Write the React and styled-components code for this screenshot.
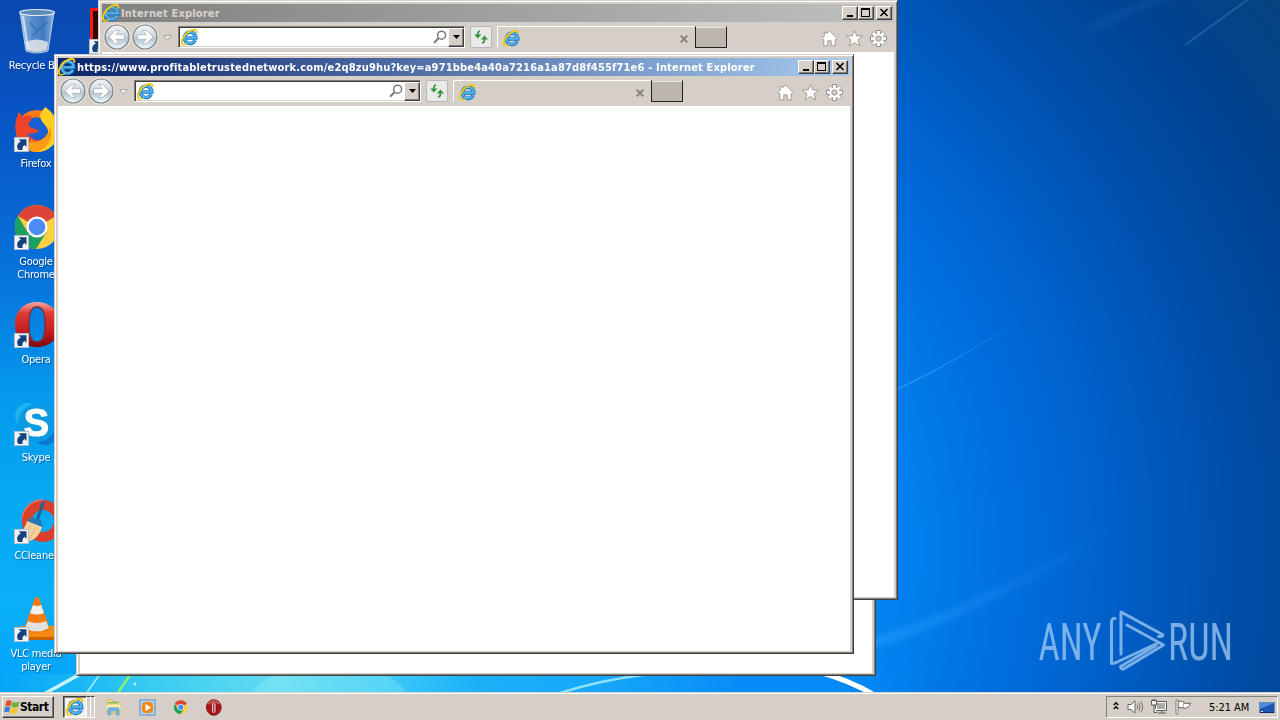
import React from 'react';
import styled, { createGlobalStyle } from 'styled-components';


const FirefoxIcon = () => (
  <svg width="48" height="48" viewBox="0 0 48 48">
    <circle cx="25" cy="25" r="21" fill="#ff7a18" />
    <path d="M4 26 C2 17 5 10 7 6 L11 11 L17 9 L22 13 C30 12 37 18 36 27 C35 37 24 38 19 33 L16 44 C9 41 5 34 4 26Z" fill="#f0452b" />
    <path d="M20 12 C28 9 37 16 36 26 C35 35 24 37 17 30 L15 27 C20 29 25 27 27 24 L20 22 L16 19 Z" fill="#1c5fd0" />
    <path d="M33 1 C41 6 47 15 46 27 C45 40 34 47 22 46 C33 42 38 34 36 25 C36 20 29 17 28 10 C28 6 31 5 33 1Z" fill="#ffcf1f" />
    <path d="M8 32 C14 38 21 37 29 34 C34 31 37 27 38 20 C43 32 34 45 23 46 C15 45 9 39 8 32Z" fill="#ff9b15" />
  </svg>
);

const ChromeIcon = ({ size = 48 }) => (
  <svg width={size} height={size} viewBox="0 0 48 48">
    <circle cx="25" cy="23" r="22" fill="#fbd043" />
    <path d="M25 23 L5.9 12 A22 22 0 0 1 44.1 12 Z" fill="#dc4437" />
    <path d="M5.9 12 A22 22 0 0 0 24 45 L34.5 28 L25 23 L15.5 28 Z" fill="#1aa15f" />
    <circle cx="25" cy="23" r="10.5" fill="#fff" />
    <circle cx="25" cy="23" r="8.3" fill="#4c8bf5" />
  </svg>
);

const OperaIcon = ({ size = 48 }) => (
  <svg width={size} height={size} viewBox="0 0 48 48">
    <defs>
      <linearGradient id="opera" x1="0" y1="0" x2="0" y2="1">
        <stop offset="0" stopColor="#f4a8a0" />
        <stop offset=".25" stopColor="#de3a34" />
        <stop offset=".7" stopColor="#c01a1c" />
        <stop offset="1" stopColor="#7a0a0c" />
      </linearGradient>
    </defs>
    <path
      fillRule="evenodd"
      fill="url(#opera)"
      d="M25 0 C39 0 48 10 48 22 C48 35 39 45 25 45 C11 45 3 35 3 22 C3 10 11 0 25 0Z M25 5 C18 5 17 13 17 22.5 C17 32 18 40 25 40 C32 40 33 32 33 22.5 C33 13 32 5 25 5Z"
    />
    <path d="M25 5 C18 5 17 13 17 22.5 C17 32 18 40 25 40 C32 40 33 32 33 22.5 C33 13 32 5 25 5Z" fill="none" stroke="#7c3038" strokeWidth="1.4" />
  </svg>
);

const SkypeIcon = () => (
  <svg width="48" height="48" viewBox="0 0 48 48">
    <circle cx="16" cy="16" r="13" fill="#1cb4f0" />
    <circle cx="33" cy="31" r="14" fill="#0a78d4" />
    <circle cx="25" cy="23" r="19" fill="#0c9ae4" />
    <text x="24.5" y="36" textAnchor="middle" fontFamily="Liberation Sans" fontWeight="bold" fontSize="38" fill="#fff" stroke="#fff">S</text>
  </svg>
);

const CCleanerIcon = () => (
  <svg width="48" height="48" viewBox="0 0 48 48">
    <circle cx="31" cy="23" r="16" fill="none" stroke="#d8402c" strokeWidth="10" />
    <path d="M31 2 A21 21 0 0 0 10 20" fill="none" stroke="#ec7058" strokeWidth="1.5" />
    <path d="M31 5 L25 23" stroke="#1b6598" strokeWidth="3" strokeLinecap="round" />
    <path d="M19 19 L29 22 L31 29 L15 24 Z" fill="#2478b4" />
    <path d="M15 23 L30 29 C28 37 22 43 14 44 L4 38 C9 35 13 30 15 23Z" fill="#f5d09c" />
    <path d="M19 27 L12 41 M24 29 L17 42" stroke="#e2b47c" />
  </svg>
);

const VlcIcon = () => (
  <svg width="48" height="48" viewBox="0 2 48 48">
    <path d="M9 32 H43 L48 44 H3 Z" fill="#f58a12" />
    <path d="M3 43 H48 V46 H3 Z" fill="#c86408" />
    <path d="M23 4 Q25 2 27 4 L38 35 Q25 43 12 35 Z" fill="#f57c10" />
    <path d="M21 11 Q25 13 29 11 L32 19 Q25 22 18 19 Z" fill="#f1f1f1" />
    <path d="M16 27 Q25 31 34 27 L37 34 Q25 41 13 34 Z" fill="#e2e2e2" />
  </svg>
);

const RecycleBinIcon = () => (
  <svg width="48" height="48" viewBox="0 0 48 48">
    <defs>
      <linearGradient id="bin" x1="0" x2="1" y1="0" y2="0">
        <stop offset="0" stopColor="#c8dcec" stopOpacity=".75" />
        <stop offset=".4" stopColor="#6c9fd0" stopOpacity=".75" />
        <stop offset=".7" stopColor="#4c86c4" stopOpacity=".8" />
        <stop offset="1" stopColor="#c8dcec" stopOpacity=".7" />
      </linearGradient>
    </defs>
    <path d="M8 4 L14 43 Q25 47 36 43 L42 4 Z" fill="url(#bin)" stroke="#b6cfe4" strokeWidth="1" />
    <path d="M13 34 Q25 29 36 34 L35 42 Q25 46 15 42 Z" fill="#e4e6e6" opacity=".85" />
    <path d="M11 8 L16 41" stroke="#e8f4fc" strokeWidth="2" opacity=".7" />
    <path d="M18 15 L25 23 L36 14 M20 28 L29 20" stroke="#2c68b0" strokeWidth="2" fill="none" opacity=".5" />
    <ellipse cx="25" cy="4.5" rx="17.5" ry="3" fill="#5c8cb8" stroke="#dce8f0" strokeWidth="1.2" />
  </svg>
);

const AcrobatIcon = () => (
  <svg width="48" height="48" viewBox="0 0 48 48">
    <rect x="4.5" y="1.5" width="42" height="43" fill="#300406" stroke="#f41c10" strokeWidth="3" />
  </svg>
);

const IeIcon = ({ size = 17 }) => (
  <svg width={size} height={size} viewBox="0 0 18 18">
    <path d="M15 12 A6 6 0 1 1 15.6 9.5 H5" fill="none" stroke="#1878c4" strokeWidth="3.8" />
    <path d="M14.9 12 A6 6 0 1 1 15.6 9.2 H5.2" fill="none" stroke="#55b4ee" strokeWidth="2" />
    <path d="M2.1 16.6 C-1.4 14 3.2 5.5 8.5 2.7 C13 .1 17.5 .2 16 4.5" fill="none" stroke="#f0c818" strokeWidth="2" />
    <path d="M2 16.8 C3.2 17.4 5 16.7 7 15.6" fill="none" stroke="#f0c818" strokeWidth="1.4" />
  </svg>
);

const NavArrow = ({ forward = false }) => (
  <svg width="28" height="28" viewBox="0 0 28 28">
    <defs>
      <linearGradient id="nav" x1="0" y1="0" x2="0" y2="1">
        <stop offset="0" stopColor="#f4f6f8" />
        <stop offset=".45" stopColor="#d0d9df" />
        <stop offset=".55" stopColor="#b4c2cc" />
        <stop offset="1" stopColor="#ecfaff" />
      </linearGradient>
    </defs>
    <circle cx="14" cy="14" r="13.6" fill="#efece8" />
    <circle cx="14" cy="14" r="12" fill="url(#nav)" stroke="#7c8082" strokeWidth="1.2" />
    <path
      transform={forward ? 'rotate(180 14 14)' : undefined}
      d="M6 14 L12.4 7.4 H16.4 L12.8 11.7 H21.5 V16.3 H12.8 L16.4 20.6 H12.4 Z"
      fill="#fff"
      stroke="#a4aeb5"
      strokeWidth=".7"
    />
  </svg>
);

const SearchIcon = () => (
  <svg width="14" height="14" viewBox="0 0 14 14">
    <circle cx="8.6" cy="5.2" r="4" fill="none" stroke="#7c7c7c" strokeWidth="1.5" />
    <path d="M5.8 8 L1 12.7" stroke="#7c7c7c" strokeWidth="2" />
  </svg>
);

const RefreshIcon = () => (
  <svg width="16" height="16" viewBox="0 0 16 16">
    <path d="M4.8 7 V5 C4.8 3 5.4 2.2 7 2" fill="none" stroke="#3f9444" strokeWidth="1.7" />
    <path d="M1.2 5.4 H8.4 L4.8 9.4 Z" fill="#2f9a38" />
    <path d="M11.4 9 V11 C11.4 13 10.6 13.8 9 14" fill="none" stroke="#3f9444" strokeWidth="1.7" />
    <path d="M7.8 10.4 H15 L11.4 6.4 Z" fill="#2f9a38" />
  </svg>
);

const HomeIcon = () => (
  <svg width="17" height="17" viewBox="0 0 17 17">
    <path d="M8.5 .8 L16.2 8.6 L15 10 L14.2 9.4 V15.8 H10.2 V10.8 H6.8 V15.8 H2.8 V9.4 L2 10 L.8 8.6 L3.3 6 V2.3 H5.7 V3.7 Z" fill="#fff" stroke="#98948e" strokeWidth=".9" />
  </svg>
);

const StarIcon = () => (
  <svg width="17" height="17" viewBox="0 0 17 17">
    <path d="M8.5 .5 L10.8 6 H16.6 L12 9.8 L13.8 15.9 L8.5 12.5 L3.2 15.9 L5 9.8 L.4 6 H6.2 Z" fill="#fff" stroke="#98948e" strokeWidth=".9" />
  </svg>
);

const GearIcon = () => (
  <svg width="17" height="17" viewBox="0 0 17 17">
    <g fill="#fff" stroke="#8c8984" strokeWidth=".9">
      {[0, 45, 90, 135, 180, 225, 270, 315].map((a) => (
        <rect key={a} x="6.7" y=".5" width="3.6" height="4" transform={`rotate(${a} 8.5 8.5)`} />
      ))}
      <circle cx="8.5" cy="8.5" r="5.6" />
    </g>
    {[0, 45, 90, 135, 180, 225, 270, 315].map((a) => (
      <rect key={a} x="7.2" y="1" width="2.6" height="4" fill="#fff" transform={`rotate(${a} 8.5 8.5)`} />
    ))}
    <circle cx="8.5" cy="8.5" r="2.7" fill="#d4cdc4" stroke="#8c8984" strokeWidth=".9" />
  </svg>
);

const ShortcutArrow = () => (
  <ShortcutBadge width="15" height="15" viewBox="0 0 15 15">
    <rect x=".5" y=".5" width="14" height="14" fill="#f0f4f8" stroke="#b4bec8" />
    <path d="M4.6 2.3 H12.5 V9.9 L10.6 8 C8.6 9.2 8.2 10.6 8.6 13 H4.4 C2 9.5 3.4 6 6.8 4.4 Z" fill="#15427c" />
  </ShortcutBadge>
);

const icons = [
  { label: 'Recycle Bin', icon: <RecycleBinIcon /> },
  { label: 'Firefox', icon: <FirefoxIcon />, shortcut: true },
  { label: 'Google Chrome', icon: <ChromeIcon />, shortcut: true },
  { label: 'Opera', icon: <OperaIcon />, shortcut: true },
  { label: 'Skype', icon: <SkypeIcon />, shortcut: true },
  { label: 'CCleaner', icon: <CCleanerIcon />, shortcut: true },
  { label: 'VLC media player', icon: <VlcIcon />, shortcut: true },
];

const DesktopIcon = ({ item }) => (
  <IconCell>
    <IconPicture>
      {item.icon}
      {item.shortcut && <ShortcutArrow />}
    </IconPicture>
    <IconLabel>{item.label}</IconLabel>
  </IconCell>
);

const BrowserWindow = ({ x, y, title, active = false }) => (
  <WindowFrame $x={x} $y={y}>
    <TitleBar $active={active}>
      <IeIcon size={18} />
      <TitleText $active={active}>{title}</TitleText>
      <CaptionButton>
        <svg width="10" height="9" viewBox="0 0 10 9"><path d="M2 7 H8 V9 H2Z" /></svg>
      </CaptionButton>
      <CaptionButton>
        <svg width="10" height="9" viewBox="0 0 10 9"><path fillRule="evenodd" d="M0 0 H9 V9 H0Z M1 2 V8 H8 V2Z" /></svg>
      </CaptionButton>
      <CaptionButton $last>
        <svg width="10" height="9" viewBox="0 0 10 9"><path d="M1.5 1 L8.5 8 M8.5 1 L1.5 8" stroke="#000" strokeWidth="1.6" /></svg>
      </CaptionButton>
    </TitleBar>
    <Toolbar>
      <NavGroup>
        <NavArrow />
        <NavArrow forward />
      </NavGroup>
      <HistoryArrow width="9" height="6" viewBox="0 0 9 6">
        <path d="M.8 .6 H8.2 L4.5 5.2Z" fill="#f4f2ee" stroke="#aaa49c" />
      </HistoryArrow>
      <AddressBar>
        <IeIcon />
        <Spacer />
        <SearchIcon />
        <DropButton>
          <svg width="7" height="4" viewBox="0 0 7 4"><path d="M0 0 H7 L3.5 4Z" /></svg>
        </DropButton>
      </AddressBar>
      <RefreshButton><RefreshIcon /></RefreshButton>
      <Tab>
        <IeIcon />
        <Spacer />
        <svg width="8" height="8" viewBox="0 0 8 8"><path d="M.7 .7 L7.3 7.3 M7.3 .7 L.7 7.3" stroke="#85807a" strokeWidth="1.9" /></svg>
      </Tab>
      <NewTabButton />
      <Spacer />
      <CommandIcons>
        <HomeIcon />
        <StarIcon />
        <GearIcon />
      </CommandIcons>
    </Toolbar>
    <Page />
  </WindowFrame>
);

const Streaks = () => (
  <StreakLayer width="1280" height="720" viewBox="0 0 1280 720">
    <defs>
      <filter id="soft"><feGaussianBlur stdDeviation="3" /></filter>
      <filter id="thin"><feGaussianBlur stdDeviation=".6" /></filter>
      <linearGradient id="fade1" gradientUnits="userSpaceOnUse" x1="876" y1="0" x2="1110" y2="0">
        <stop offset="0" stopColor="#3ca8ff" stopOpacity=".4" />
        <stop offset="1" stopColor="#3ca8ff" stopOpacity="0" />
      </linearGradient>
      <linearGradient id="fade2" gradientUnits="userSpaceOnUse" x1="896" y1="0" x2="1030" y2="0">
        <stop offset="0" stopColor="#6fbcff" stopOpacity=".5" />
        <stop offset="1" stopColor="#6fbcff" stopOpacity="0" />
      </linearGradient>
    </defs>
    <path d="M870 644 Q990 606 1110 530" stroke="url(#fade1)" strokeWidth="9" fill="none" filter="url(#soft)" />
    <path d="M896 390 Q970 355 1040 305" stroke="url(#fade2)" strokeWidth="1.2" fill="none" />
    <path d="M1185 45 L1250 -2" stroke="#5c9cd8" strokeWidth="2" opacity=".3" filter="url(#thin)" />
    <path d="M1090 30 Q1130 8 1170 -4" stroke="#3c84cc" strokeWidth="8" opacity=".15" filter="url(#soft)" />
    <g fill="none" filter="url(#thin)">
      <path d="M44 694 L84 672" stroke="#c8f4ff" strokeWidth="3.5" />
      <path d="M86 694 L100 674" stroke="#90e4fc" strokeWidth="2" />
      <path d="M117 694 L132 672" stroke="#8cf070" strokeWidth="2.5" />
      <path d="M560 693 Q600 680 650 674" stroke="#90e0ff" strokeWidth="2.4" />
      <path d="M250 694 Q262 680 275 674 H385 Q400 682 408 694Z" fill="#9ceef8" opacity=".3" />
      <path d="M812 670 Q850 680 876 696" stroke="#fff" strokeWidth="5" />
    </g>
    <circle cx="135" cy="684" r="1.5" fill="#b0f0ff" />
  </StreakLayer>
);

const Watermark = () => (
  <WatermarkBox width="220" height="80" viewBox="0 0 220 80">
    <g fill="#a9d0f6" fontFamily="Roboto" fontSize="52" fontWeight="400">
      <text x="3.5" y="54" textLength="63" lengthAdjust="spacingAndGlyphs">ANY</text>
      <text x="133" y="54" textLength="65" lengthAdjust="spacingAndGlyphs">RUN</text>
    </g>
    <g fill="none" stroke="#a9d0f6" strokeWidth="3" strokeLinejoin="round" strokeLinecap="round">
      <path d="M80 12.5 Q76.5 12 76.5 16 V57.5 L80 57 L123 37" />
      <path d="M86 48 V6 L127.5 28.5 Q128.5 31 123.5 30.5" />
      <path d="M92 19 L128.5 39 L88.5 63 Q86 63.5 85.5 60.5 L121 39.5" />
    </g>
  </WatermarkBox>
);

const Taskbar = () => (
  <TaskbarRow>
    <StartButton>
      <svg width="16" height="16" viewBox="0 0 16 16">
        <path d="M2.5 2 Q5 .5 7.7 2.3 L6.4 7.5 Q4 6 1.2 7.3Z" fill="#e4502c" />
        <path d="M8.4 2.7 Q11.5 4.5 15.6 2.5 L14.2 7.8 Q11 9.4 7.2 7.8Z" fill="#6cb43c" />
        <path d="M1 8 Q4 6.8 6.2 8.2 L4.9 13.4 Q2.5 12 0 13.3Z" fill="#3c80d8" />
        <path d="M7 8.6 Q10 10 14 8.6 L12.6 14 Q9 15.4 5.7 13.8Z" fill="#f8c430" />
      </svg>
      Start
    </StartButton>
    <TaskButtons>
      <ActiveTask><IeIcon size={18} /></ActiveTask>
      <StackEdge />
      <StackEdge />
    </TaskButtons>
    <PinnedIcons>
      <svg width="17" height="17" viewBox="0 0 17 17">
        <path d="M2 1 H7 L8.5 3 H15 V14 H2Z" fill="#f6dc82" stroke="#d0ac48" strokeWidth=".7" />
        <path d="M3 3.8 H13" stroke="#5cb46c" strokeWidth="1.2" />
        <path d="M1.5 6 H15.5 V11 H1.5Z" fill="#fbeeb4" />
        <path d="M3 16 V10 Q3 8.8 4 8.8 H13 Q14 8.8 14 10 V16 H11.3 V12 H5.7 V16Z" fill="#6cb8e4" stroke="#4894c8" strokeWidth=".5" />
      </svg>
      <svg width="17" height="17" viewBox="0 0 17 17">
        <rect x="1" y="1" width="15" height="15" fill="#c4dcf0" stroke="#4c8cc8" />
        <rect x="3" y="3" width="11" height="11" fill="#8cbce4" />
        <circle cx="8.5" cy="8.5" r="6" fill="#f48a18" />
        <path d="M6.5 5 L12 8.5 L6.5 12Z" fill="#fff" />
      </svg>
      <ChromeIcon size={15} />
      <svg width="17" height="17" viewBox="0 0 17 17">
        <ellipse cx="8.8" cy="8.5" rx="7.4" ry="7.8" fill="#b01418" stroke="#780a0c" strokeWidth=".8" />
        <path d="M3.5 5 Q8.8 -1.5 14 5" fill="none" stroke="#e06c64" strokeWidth="1.5" />
        <rect x="6.6" y="2.8" width="4.4" height="11.4" rx="2.2" fill="#e8d8d4" stroke="#6c0a0c" strokeWidth=".8" />
        <path d="M8.8 4 V13" stroke="#8c1c1c" strokeWidth="1.2" />
      </svg>
    </PinnedIcons>
    <Spacer />
    <Tray>
      <svg width="8" height="12" viewBox="0 0 8 12"><path d="M1.8 4 L4 1.8 L6.2 4 M1.8 8 L4 5.8 L6.2 8" fill="none" stroke="#000" strokeWidth="1.4" /></svg>
      <svg width="17" height="16" viewBox="0 0 17 16">
        <path d="M1 5.5 H4 L8 1.8 V14.2 L4 10.5 H1Z" fill="#fff" stroke="#68645e" />
        <path d="M10 5.5 Q11.5 8 10 10.5 M12 3.8 Q14.4 8 12 12.2 M14 2.5 Q17.4 8 14 13.5" fill="none" stroke="#77736d" />
      </svg>
      <svg width="17" height="16" viewBox="0 0 17 16">
        <path d="M4.5 2.5 H15.5 V11.5 H4.5Z" fill="#aaa8a4" stroke="#5c5a56" />
        <path d="M5.5 3.5 H14.5 V10.5 H5.5Z" fill="none" stroke="#fff" />
        <path d="M7 14 H15 M11 12 V14" stroke="#5c5a56" />
        <path d="M.5 1.5 H5.5 V6 H.5Z M2 0 V1.5 M4 0 V1.5 M3 6 V13.5 H6" fill="#f4f2ee" stroke="#5c5a56" />
      </svg>
      <svg width="17" height="16" viewBox="0 0 17 16">
        <path d="M3 2.5 Q6 1.5 9 3 V9 Q6 8 3 9Z" fill="#fff" stroke="#68645e" />
        <path d="M9 4 Q12 5 15.5 4 Q14 9 9 9.5" fill="#fff" stroke="#68645e" />
        <path d="M1 1 H3 V15 H1Z" fill="#fff" stroke="#68645e" strokeWidth=".8" />
      </svg>
      <Clock>5:21 AM</Clock>
      <svg width="16" height="15" viewBox="0 0 16 15">
        <rect x=".5" y="2.5" width="15" height="10" fill="#1d56b0" stroke="#6c8cb4" />
        <path d="M1 3 H15 L1 9Z" fill="#4c8cdc" />
        <path d="M1 12.5 H15" stroke="#0c2c64" />
        <path d="M2 11.5 H4" stroke="#e8f0f8" />
      </svg>
    </Tray>
  </TaskbarRow>
);

const App = () => {
  return (
    <Desktop>
      <GlobalStyle />
      <Streaks />
      <IconColumn>
        {icons.map((item) => (
          <DesktopIcon key={item.label} item={item} />
        ))}
      </IconColumn>
      <IconColumn>
        <DesktopIcon item={{ label: '', icon: <AcrobatIcon />, shortcut: true }} />
      </IconColumn>
      <Watermark />
      <BrowserWindow x={76} y={76} title="Internet Explorer" />
      <BrowserWindow x={98} y={0} title="Internet Explorer" />
      <BrowserWindow
        x={54}
        y={54}
        active
        title="https://www.profitabletrustednetwork.com/e2q8zu9hu?key=a971bbe4a40a7216a1a87d8f455f71e6 - Internet Explorer"
      />
      <Taskbar />
    </Desktop>
  );
};

export default App;


const GlobalStyle = createGlobalStyle`
  body {
    margin: 0;
    overflow: hidden;
    font-family: "DejaVu Sans Condensed", "DejaVu Sans", sans-serif;
    font-stretch: condensed;
    font-size: 11px;
  }
  svg {
    display: block;
    flex-shrink: 0;
  }
`;

const Desktop = styled.div`
  position: relative;
  display: flex;
  width: 1280px;
  height: 720px;
  box-sizing: border-box;
  padding-bottom: 28px;
  overflow: hidden;
  background:
    linear-gradient(90deg, #04a4fa 0, #18b8f4 80px, #38ccf0 150px, #62dcf2 280px, #3cccf6 380px, #1cb0f8 480px, #16a8fa 600px, #068cf8 740px, rgba(2, 132, 245, 0) 930px) 0 674px / 930px 20px no-repeat,
    linear-gradient(180deg, #0a49ae 0, #0852c2 100px, #0763cf 200px, #067bdf 300px, #049aee 400px, #06a8f4 500px, #0aaff8 600px, #04a6fa 676px) 0 0 / 99px 676px no-repeat,
    radial-gradient(ellipse 920px 840px at 400px 550px, #0a9cff 0, #0289f4 50%, #006fe0 66%, #005fc8 78%, #004ea8 91%, #004290 104%, #084478 120%);
`;

const StreakLayer = styled.svg`
  position: absolute;
  inset: 0;
`;

const IconColumn = styled.div`
  position: relative;
  width: 75px;
  flex-shrink: 0;
`;

const IconCell = styled.div`
  display: flex;
  flex-direction: column;
  align-items: center;
  width: 72px;
  height: 98px;
  box-sizing: border-box;
  padding-top: 8px;
`;

const IconPicture = styled.div`
  position: relative;
  width: 48px;
  height: 48px;
`;

const ShortcutBadge = styled.svg`
  position: absolute;
  left: 2px;
  bottom: 2px;
`;

const IconLabel = styled.span`
  width: 62px;
  margin-top: 3px;
  color: #fff;
  line-height: 13px;
  text-align: center;
  letter-spacing: -0.25px;
  text-shadow: 1px 1px 1px rgba(0, 20, 60, 0.5);
`;

const WindowFrame = styled.div`
  position: absolute;
  left: ${({ $x }) => $x}px;
  top: ${({ $y }) => $y}px;
  display: flex;
  flex-direction: column;
  width: 800px;
  height: 600px;
  box-sizing: border-box;
  padding: 2px 3px 2px 2px;
  background: #d6cfc7;
  border: 1px solid #d6cfc7;
  border-right-color: #404040;
  border-bottom-color: #404040;
  box-shadow: inset 1px 1px #fff, inset -1px -1px #808080;
`;

const TitleBar = styled.div`
  display: flex;
  align-items: center;
  height: 18px;
  flex-shrink: 0;
  margin: 1px 0 0 1px;
  background: ${({ $active }) =>
    $active ? 'linear-gradient(90deg, #0a246a, #a6caf0)' : 'linear-gradient(90deg, #808080, #c0c0c0)'};
`;

const TitleText = styled.span`
  flex: 1;
  margin-left: 1px;
  color: ${({ $active }) => ($active ? '#fff' : '#d8d2ca')};
  font-weight: bold;
  letter-spacing: 0.17px;
  white-space: nowrap;
`;

const CaptionButton = styled.div`
  display: flex;
  align-items: flex-start;
  width: 16px;
  height: 14px;
  box-sizing: border-box;
  padding: 1px 0 0 2px;
  margin-left: ${({ $last }) => ($last ? '2px' : '0')};
  margin-right: ${({ $last }) => ($last ? '2px' : '0')};
  background: #d6cfc7;
  border: 1px solid #fff;
  border-right-color: #404040;
  border-bottom-color: #404040;
  box-shadow: inset -1px -1px #808080;
`;

const Toolbar = styled.div`
  display: flex;
  align-items: center;
  height: 30px;
  flex-shrink: 0;
  padding-left: 2px;
`;

const NavGroup = styled.div`
  display: flex;
`;

const HistoryArrow = styled.svg`
  margin: 1px 6px 0 4px;
`;

const AddressBar = styled.div`
  display: flex;
  align-items: center;
  width: 287px;
  height: 22px;
  box-sizing: border-box;
  padding-left: 2px;
  background: #fff;
  border: 1px solid #807c76;
  border-right-color: #fff;
  border-bottom-color: #fff;
  box-shadow: inset 1px 1px #404040, inset -1px -1px #d6cfc7;
`;

const Spacer = styled.div`
  flex: 1;
`;

const DropButton = styled.div`
  display: flex;
  align-items: center;
  justify-content: center;
  width: 16px;
  height: 19px;
  box-sizing: border-box;
  margin-left: 1px;
  background: #d6cfc7;
  border: 1px solid #fff;
  border-right-color: #404040;
  border-bottom-color: #404040;
  box-shadow: inset -1px -1px #808080;
`;

const RefreshButton = styled.div`
  display: flex;
  align-items: center;
  justify-content: center;
  width: 22px;
  height: 22px;
  box-sizing: border-box;
  margin-left: 5px;
  background: #e9e9e7;
  border: 1px solid #b4b8ba;
  border-radius: 2px;
`;

const Tab = styled.div`
  display: flex;
  align-items: center;
  width: 197px;
  height: 22px;
  box-sizing: border-box;
  margin-left: 5px;
  padding: 2px 6px 0 5px;
  border-left: 1px solid #fff;
  border-top: 1px solid #fff;
`;

const NewTabButton = styled.div`
  width: 32px;
  height: 22px;
  box-sizing: border-box;
  margin-left: 1px;
  background: #bdb6af;
  border: 1px solid #202020;
  border-top-color: #d6cfc7;
  box-shadow: inset 0 1px #e8e4de;
`;

const CommandIcons = styled.div`
  display: flex;
  align-items: center;
  gap: 7.5px;
  margin: 3px 7px 0 0;
`;

const Page = styled.div`
  flex: 1;
  margin-left: 1px;
  background: #fff;
`;

const WatermarkBox = styled.svg`
  position: absolute;
  left: 1035px;
  top: 606px;
  opacity: 0.72;
`;

const TaskbarRow = styled.div`
  position: absolute;
  left: 0;
  right: 0;
  bottom: 0;
  display: flex;
  align-items: center;
  height: 28px;
  box-sizing: border-box;
  padding: 1px 2px 0 2px;
  background: #d6cfc7;
  border-top: 1px solid #d6cfc7;
  box-shadow: inset 0 1px #fff;
`;

const StartButton = styled.div`
  display: flex;
  align-items: center;
  width: 52px;
  height: 22px;
  box-sizing: border-box;
  padding-left: 1px;
  font-size: 12px;
  font-weight: bold;
  letter-spacing: -0.45px;
  background: #d6cfc7;
  border: 1px solid #fff;
  border-right-color: #404040;
  border-bottom-color: #404040;
  box-shadow: inset -1px -1px #808080;
`;

const TaskButtons = styled.div`
  display: flex;
  height: 22px;
  margin-left: 9px;
`;

const ActiveTask = styled.div`
  display: flex;
  align-items: center;
  justify-content: center;
  width: 24px;
  box-sizing: border-box;
  background: #f3f0ec;
  border: 1px solid #404040;
  border-right-color: #fff;
  border-bottom-color: #fff;
  box-shadow: inset 1px 1px #808080;
`;

const StackEdge = styled.div`
  width: 4px;
  box-sizing: border-box;
  border-top: 1px solid #404040;
  border-right: 1px solid #fff;
  border-bottom: 1px solid #fff;
`;

const PinnedIcons = styled.div`
  display: flex;
  align-items: center;
  gap: 17px;
  margin-left: 10px;
`;

const Tray = styled.div`
  display: flex;
  align-items: center;
  gap: 7px;
  width: 172px;
  height: 22px;
  box-sizing: border-box;
  padding-left: 5px;
  border: 1px solid #808080;
  border-right-color: #fff;
  border-bottom-color: #fff;
`;

const Clock = styled.span`
  width: 43px;
  margin: 0 0 0 10px;
  letter-spacing: -0.05px;
  white-space: nowrap;
`;
